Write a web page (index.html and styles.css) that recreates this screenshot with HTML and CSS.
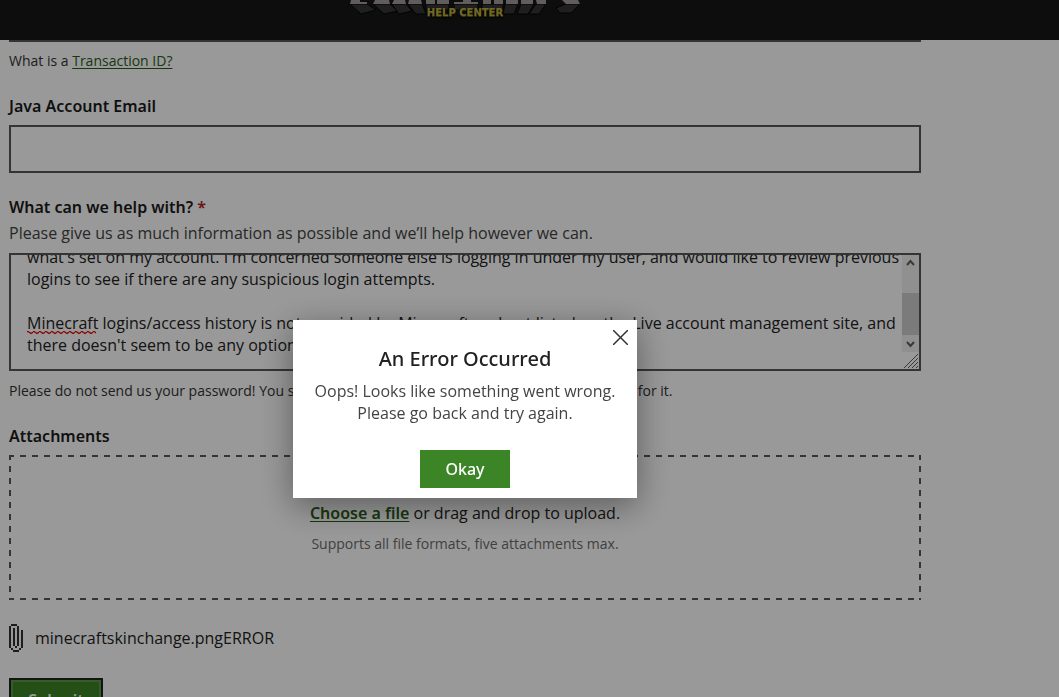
FILE: index.html
```html
<!DOCTYPE html>
<html lang="en">
<head>
<meta charset="utf-8">
<title>Minecraft Help Center</title>
<link rel="stylesheet" href="styles.css">
</head>
<body>
<header class="site-header">
  <svg class="logo" width="250" height="24" viewBox="0 0 250 24" role="img" aria-label="Minecraft">
    <g fill="#343434" stroke="#050505" stroke-width="1">
      <path d="M10 4h17l9 6-15 4z"/><path d="M33 4h17l8 7-14 3z"/><path d="M52 4h14l6 7-13 3z"/><path d="M68 4h14l4 10H76z"/>
      <path d="M86 4h23v6H86z"/><path d="M114 4h24v6h-24z"/><path d="M142 4h21v6h-21z"/>
      <path d="M165 4h13l-4 10h-11z"/><path d="M181 4h13l-6 10h-11z"/><path d="M196 4h10l-7 10h-10z"/>
      <path d="M226 4h14l-9 9h-11l-4-5z"/>
    </g>
    <g fill="#a49c9c">
      <path d="M11 0h9v2h7v2H10z"/><path d="M35 0h14l1 4H33z"/><path d="M54 0h11l1 4H52z"/><path d="M69 0h12l1 4H68z"/>
      <path d="M86 0h9v4h-9z"/><path d="M97 0h12v4H97z"/><path d="M114 2h9V0h8v2h7v2h-24z"/><path d="M143 0h8v4h-8z"/><path d="M154 0h9v4h-9z"/>
      <path d="M166 0h12v4h-12z"/><path d="M181 0h12v4h-12z"/><path d="M196 0h10v4h-9z"/><path d="M222 0h16l2 4h-14z"/>
    </g>
  </svg>
  <span class="logo-sub">HELP CENTER</span>
</header>

<main class="form-page">
  <form class="form">
    <div class="field field-top">
      <p class="note">What is a <a class="link" href="#">Transaction ID?</a></p>
    </div>
    <div class="field">
      <label class="label" for="email">Java Account Email</label>
      <input class="input" id="email" type="email">
    </div>
    <div class="field">
      <label class="label" for="help">What can we help with? <span class="required">*</span></label>
      <p class="hint">Please give us as much information as possible and we’ll help however we can.</p>
      <div class="textbox">
        <textarea class="textarea" id="help" rows="6" spellcheck="false">what's set on my account. I'm concerned someone else is logging in under my user, and would like to review previous
logins to see if there are any suspicious login attempts.

Minecraft logins/access history is not provided by Minecraft and not listed on the Live account management site, and
there doesn't seem to be any option</textarea>
        <svg class="squiggle" width="69" height="4" aria-hidden="true">
          <defs><pattern id="wave" width="6" height="4" patternUnits="userSpaceOnUse"><path d="M-1 .5H1L4 2.500 7 .5" fill="none" stroke="#f00000" stroke-width="1.300"/></pattern></defs>
          <rect width="69" height="4" fill="url(#wave)"/>
        </svg>
        <div class="scroll" aria-hidden="true">
          <svg class="scroll-arrow" width="17" height="17"><path d="M5 10l3.500-4 3.500 4" /></svg>
          <div class="scroll-track"><div class="scroll-thumb"></div></div>
          <svg class="scroll-arrow" width="17" height="17"><path d="M5 7l3.500 4L12 7" /></svg>
          <svg class="grip" width="17" height="17"><path d="M2 16L16 2M6 16L16 6M10 16l6-6M14 16l2-2"/></svg>
        </div>
      </div>
      <p class="note note-below">Please do not send us your password! You should never share it, and Mojang won't ever ask you for it.</p>
    </div>
    <div class="field">
      <h2 class="label">Attachments</h2>
      <div class="dropzone">
        <p class="drop-title"><a class="link strong" href="#">Choose a file</a> or drag and drop to upload.</p>
        <p class="drop-note">Supports all file formats, five attachments max.</p>
      </div>
    </div>
    <div class="file">
      <svg class="clip" width="14" height="28" viewBox="0 0 14 28" shape-rendering="crispEdges" fill="#333" aria-hidden="true">
        <path d="M2 0h6v2H2zM0 2h2v22H0zM8 2h2v20H8zM4 4h2v18H4zM12 6h2v18h-2zM6 22h2v2H6zM2 24h2v2H2zM10 24h2v2h-2zM4 26h6v2H4z"/>
      </svg>
      <span>minecraftskinchange.pngERROR</span>
    </div>
    <button class="submit" type="button">Submit</button>
  </form>
</main>

<div class="overlay">
  <section class="modal" role="dialog" aria-modal="true" aria-labelledby="modal-title">
    <button class="close" type="button" aria-label="Close">
      <svg width="15" height="15" viewBox="0 0 15 15" stroke="#333" stroke-width="1.500"><path d="M0 0l15 15M15 0L0 15"/></svg>
    </button>
    <h1 class="modal-title" id="modal-title">An Error Occurred</h1>
    <p class="modal-text">Oops! Looks like something went wrong.<br>Please go back and try again.</p>
    <button class="okay" type="button">Okay</button>
  </section>
</div>
</body>
</html>
```
FILE: styles.css
```css
* { box-sizing: border-box; }
html, body { height: 100%; }
body {
  margin: 0;
  overflow: hidden;
  background: #fff;
  color: #222;
  font: 16px/22px "Open Sans", "Noto Sans", sans-serif;
}
p, h1, h2 { margin: 0; }

.site-header {
  position: relative;
  display: flex;
  flex-direction: column;
  align-items: center;
  height: 40px;
  padding-right: 129px;
  background: #161616;
}
.logo { display: block; }
.logo-sub {
  position: absolute;
  top: 7px;
  color: #bdb03b;
  font: bold 10px/12px "DejaVu Sans", sans-serif;
  text-shadow: 0 1px 0 #5d5720, 0 2px 2px #000;
}

.form-page { padding: 0 138px 0 9px; }
.form {
  display: flex;
  flex-direction: column;
}
.field { margin-bottom: 22px; }
.field-top {
  padding-top: 8px;
  border-top: 2px solid #585858;
}
.label {
  display: block;
  color: #1c1c1c;
  font-family: "Noto Sans", sans-serif;
  font-size: 16px;
  font-weight: 600;
  line-height: 24px;
}
.required { color: #b22222; }
.note {
  color: #333;
  font-size: 14px;
  line-height: 22px;
}
.note-below { margin-top: 9px; }
.hint {
  margin: 2px 0 8px;
  color: #444;
  line-height: 24px;
}
.link {
  color: #285d18;
  text-underline-offset: 2px;
}
.strong {
  font-family: "Noto Sans", sans-serif;
  font-weight: 600;
}
.input {
  display: block;
  width: 100%;
  height: 48px;
  margin-top: 7px;
  padding: 0 16px;
  border: 2px solid #585858;
  background: #fff;
  font: inherit;
}

.textbox {
  position: relative;
  display: flex;
  height: 118px;
  overflow: hidden;
  border: 2px solid #585858;
}
.textarea {
  flex: 1;
  height: 132px;
  margin: -9px 0 0;
  padding: 0 0 0 16px;
  border: 0;
  overflow: hidden;
  resize: none;
  background: none;
  color: #222;
  font: inherit;
}
.squiggle {
  position: absolute;
  left: 16px;
  top: 76px;
}
.scroll {
  display: flex;
  flex-direction: column;
  width: 17px;
}
.scroll-arrow {
  background: #f0f0f0;
  fill: none;
  stroke: #606060;
  stroke-width: 2;
}
.scroll-track {
  display: flex;
  flex: 1;
  align-items: flex-end;
  background: #f0f0f0;
}
.scroll-thumb {
  width: 100%;
  height: 42px;
  background: #cdcdcd;
}
.grip { stroke: #606060; }

.dropzone {
  height: 145px;
  margin-top: 7px;
  padding-top: 46px;
  background:
    repeating-linear-gradient(90deg, #585858 0 5px, transparent 5px 11px, #585858 11px 12px) top / 100% 2px no-repeat,
    repeating-linear-gradient(90deg, #585858 0 5px, transparent 5px 11px, #585858 11px 12px) bottom / 100% 2px no-repeat,
    repeating-linear-gradient(#585858 0 5px, transparent 5px 11px, #585858 11px 12px) left / 2px 100% no-repeat,
    repeating-linear-gradient(#585858 0 5px, transparent 5px 11px, #585858 11px 12px) right / 2px 100% no-repeat;
  text-align: center;
}
.drop-title { line-height: 24px; }
.drop-note {
  margin-top: 9px;
  color: #6c6c6c;
  font-size: 14px;
  line-height: 20px;
}
.file {
  display: flex;
  gap: 12px;
  align-items: center;
  margin: 2px 0 26px;
}
.clip { display: block; }
.submit {
  width: 94px;
  height: 44px;
  border: 2px solid #222;
  background: #3c8527;
  box-shadow: inset 0 0 0 2px #5a9a48;
  color: #fff;
  font: 600 16px/22px "Noto Sans", sans-serif;
}

.overlay {
  position: fixed;
  inset: 0;
  display: flex;
  align-items: flex-start;
  justify-content: center;
  padding: 320px 129px 0 0;
  background: rgba(0, 0, 0, .4);
}
.modal {
  position: relative;
  display: flex;
  flex-direction: column;
  align-items: center;
  width: 344px;
  padding: 26px 16px 10px;
  background: #fff;
  box-shadow: 0 8px 32px rgba(0, 0, 0, .4);
  color: #444;
  text-align: center;
}
.close {
  position: absolute;
  top: 10px;
  right: 9px;
  padding: 0;
  border: 0;
  background: none;
  line-height: 0;
}
.modal-title {
  color: #222;
  font: 500 20px/26px "Noto Sans", sans-serif;
}
.modal-text { margin: 8px 0 26px; }
.okay {
  padding: 8px 25px;
  border: 0;
  background: #3c8527;
  color: #fff;
  font: 500 16px/22px "Noto Sans", sans-serif;
}
```
